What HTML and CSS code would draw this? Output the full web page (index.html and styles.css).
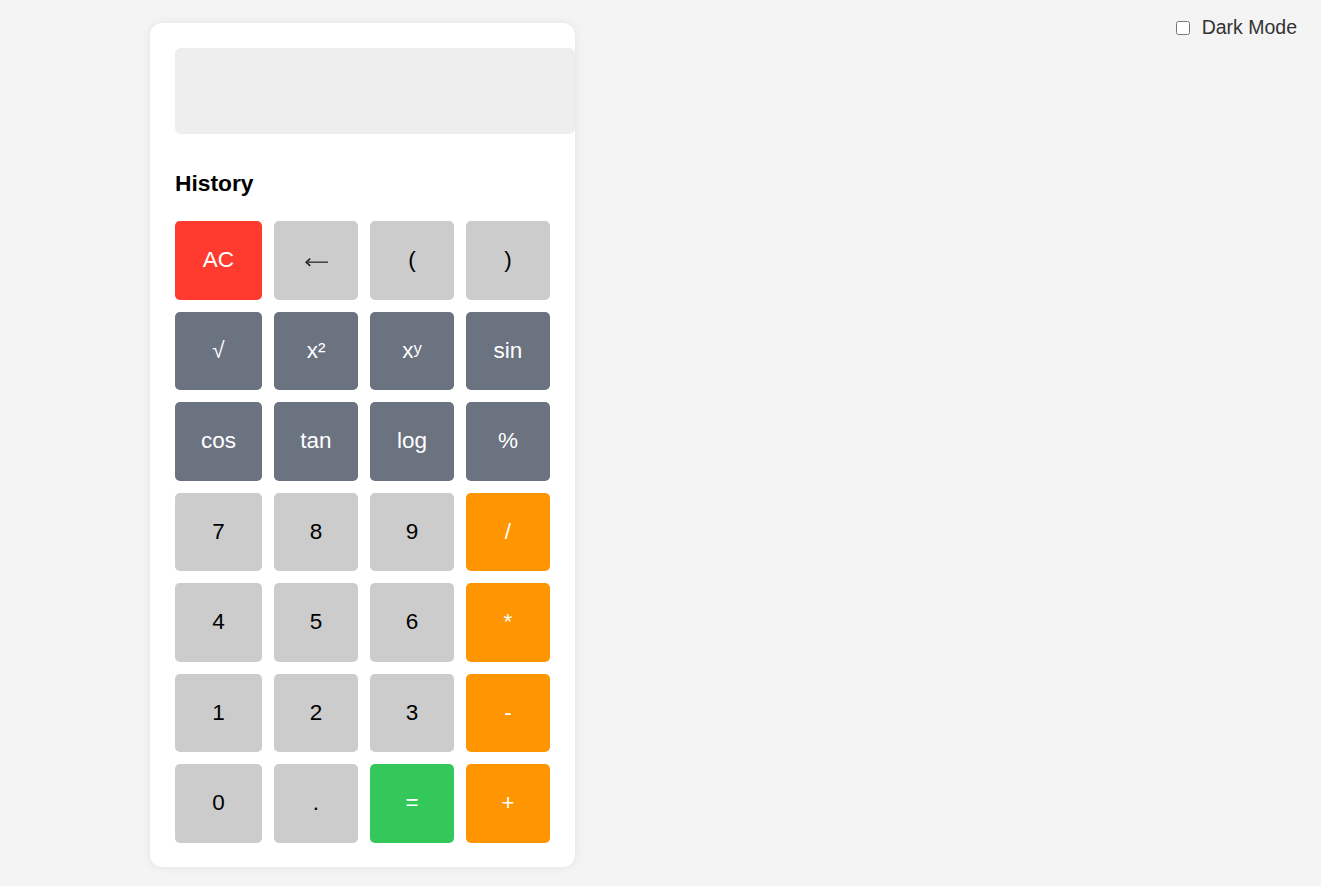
FILE: index.html
```html
<!DOCTYPE html>
<html lang="en">
<head>
<meta charset="utf-8">
<title>Calculator</title>
<link rel="stylesheet" href="styles.css">
</head>
<body>
<label class="theme-toggle"><input type="checkbox" class="theme-check"> Dark Mode</label>
<div class="calculator">
  <div class="display"></div>
  <div class="history">
    <h3 class="history-title">History</h3>
  </div>
  <div class="keys">
    <button class="key key-clear">AC</button>
    <button class="key key-light" aria-label="Backspace"><svg class="back-icon" width="24" height="10" viewBox="0 0 24 10"><path d="M3 5.2 H23" stroke="#474747" stroke-width="1.6" fill="none"/><path d="M5.2 1.6 L1.2 5.2 L5.2 8.8" stroke="#222" stroke-width="1.6" fill="none"/></svg></button>
    <button class="key key-light">(</button>
    <button class="key key-light">)</button>

    <button class="key key-fn">√</button>
    <button class="key key-fn">x²</button>
    <button class="key key-fn">x<sup class="sup">y</sup></button>
    <button class="key key-fn">sin</button>

    <button class="key key-fn">cos</button>
    <button class="key key-fn">tan</button>
    <button class="key key-fn">log</button>
    <button class="key key-fn">%</button>

    <button class="key key-light">7</button>
    <button class="key key-light">8</button>
    <button class="key key-light">9</button>
    <button class="key key-op">/</button>

    <button class="key key-light">4</button>
    <button class="key key-light">5</button>
    <button class="key key-light">6</button>
    <button class="key key-op">*</button>

    <button class="key key-light">1</button>
    <button class="key key-light">2</button>
    <button class="key key-light">3</button>
    <button class="key key-op">-</button>

    <button class="key key-light">0</button>
    <button class="key key-light">.</button>
    <button class="key key-eq">=</button>
    <button class="key key-op">+</button>
  </div>
</div>
</body>
</html>
```
FILE: styles.css
```css
html, body {
  margin: 0;
  padding: 0;
}
body {
  background: #f4f4f4;
  font-family: "Liberation Sans", Arial, sans-serif;
  color: #000;
  padding: 23px 0 0 150px;
  min-height: 886px;
  box-sizing: border-box;
}
.theme-toggle {
  position: absolute;
  top: 16px;
  right: 24px;
  font-size: 19.5px;
  color: #333;
  display: flex;
  align-items: center;
}
.theme-check {
  width: 14px;
  height: 14px;
  margin: 0 12px 0 0;
}
.calculator {
  width: 425px;
  box-sizing: border-box;
  background: #fff;
  border-radius: 12px;
  box-shadow: 0 0 10px rgba(0, 0, 0, 0.08);
  padding: 25px 25px 24px 25px;
}
.display {
  width: 400px;
  height: 86px;
  box-sizing: border-box;
  background: #eeeeee;
  border-radius: 6px;
}
.history {
  margin: 37px 0 25px 0;
}
.history-title {
  margin: 0;
  font-size: 22.8px;
  font-weight: bold;
  line-height: 25px;
}
.keys {
  display: grid;
  grid-template-columns: 87px repeat(3, 1fr);
  grid-auto-rows: 78.5px;
  gap: 12px;
}
.key {
  border: none;
  border-radius: 5px;
  font-family: "Liberation Sans", Arial, sans-serif;
  font-size: 22.5px;
  padding: 0;
  margin: 0;
  display: flex;
  align-items: center;
  justify-content: center;
  cursor: pointer;
}
.back-icon {
  display: block;
  margin-top: 3px;
  margin-left: 1px;
}
.key-light {
  background: #cccccc;
  color: #000;
}
.key-clear {
  background: #ff3b30;
  color: #fff;
}
.key-fn {
  background: #6b7280;
  color: #fff;
}
.key-op {
  background: #ff9500;
  color: #fff;
}
.key-eq {
  background: #34c759;
  color: #fff;
}
.sup {
  font-size: 0.75em;
  position: relative;
  top: -0.1em;
  vertical-align: super;
  line-height: 0;
}
```
